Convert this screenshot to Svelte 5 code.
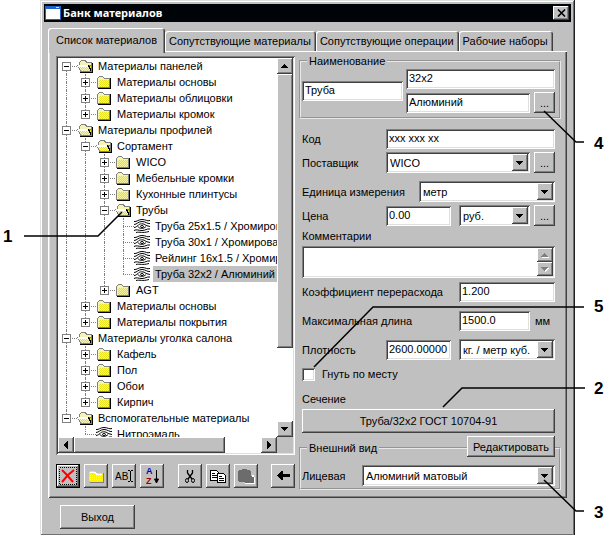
<script lang="ts">
  type Item = { label: string; open?: boolean; leaf?: boolean; selected?: boolean; children?: Item[] }
  type Row = { item: Item; rails: boolean[]; first: boolean; last: boolean }

  const tabs = ['Список материалов', 'Сопутствующие материалы', 'Сопутствующие операции', 'Рабочие наборы']
  let activeTab = $state(0)

  const materials: Item[] = [
    {
      label: 'Материалы панелей',
      open: true,
      children: [{ label: 'Материалы основы' }, { label: 'Материалы облицовки' }, { label: 'Материалы кромок' }],
    },
    {
      label: 'Материалы профилей',
      open: true,
      children: [
        {
          label: 'Сортамент',
          open: true,
          children: [
            { label: 'WICO' },
            { label: 'Мебельные кромки' },
            { label: 'Кухонные плинтусы' },
            {
              label: 'Трубы',
              open: true,
              children: [
                { label: 'Труба 25x1.5 / Хромированная', leaf: true },
                { label: 'Труба 30x1 / Хромированная', leaf: true },
                { label: 'Рейлинг 16x1.5 / Хромированный', leaf: true },
                { label: 'Труба 32x2 / Алюминий', leaf: true, selected: true },
              ],
            },
            { label: 'AGT' },
          ],
        },
        { label: 'Материалы основы' },
        { label: 'Материалы покрытия' },
      ],
    },
    {
      label: 'Материалы уголка салона',
      open: true,
      children: [{ label: 'Кафель' }, { label: 'Пол' }, { label: 'Обои' }, { label: 'Кирпич' }],
    },
    { label: 'Вспомогательные материалы', open: true, children: [{ label: 'Нитроэмаль', leaf: true }] },
  ]

  // rails: for every ancestor level, whether its vertical line goes on past this row
  function flatten(items: Item[], rails: boolean[] = []): Row[] {
    return items.flatMap((item, i) => {
      const last = i === items.length - 1
      const row = { item, rails, first: i === 0 && rails.length === 0, last }
      return [row, ...flatten(item.children ?? [], [...rails, !last])]
    })
  }
  const rows = flatten(materials)

  let name = $state('Труба')
  let size = $state('32x2')
  let finish = $state('Алюминий')
  let code = $state('xxx xxx xx')
  let price = $state('0.00')
  let comment = $state('')
  let overrun = $state('1.200')
  let maxLength = $state('1500.0')
  let density = $state('2600.00000')
  let bend = $state(false)
</script>

{#snippet arrow(dir: string)}
  <svg class="arrow" width="8" height="8" viewBox="0 0 8 8" shape-rendering="crispEdges" aria-hidden="true">
    {#if dir === 'up'}<path d="M0 6h7v-1h-1v-1h-1v-1h-1v-1h-1v1h-1v1h-1v1h-1z" />
    {:else if dir === 'down'}<path d="M0 2h7v1h-1v1h-1v1h-1v1h-1v-1h-1v-1h-1v-1h-1z" />
    {:else if dir === 'left'}<path d="M6 0v8h-1v-1h-1v-1h-1v-1h-1v-2h1v-1h1v-1h1v-1z" />
    {:else}<path d="M2 0v8h1v-1h1v-1h1v-1h1v-2h-1v-1h-1v-1h-1v-1z" />{/if}
  </svg>
{/snippet}

{#snippet combo(id: string, value: string, size: string)}
  <span class="combo {size}">
    <select {id}><option>{value}</option></select>
    <span class="drop">{@render arrow('down')}</span>
  </span>
{/snippet}

{#snippet icon(item: Item)}
  <svg class="icon" width="16" height="16" viewBox="0 0 16 16" aria-hidden="true">
    {#if item.leaf}
      <g fill="none" stroke="#000" stroke-width="1">
        <path d="M0 3.500C3 4 4 1.500 8 1.500S13 3.500 16 2.500" />
        <path d="M0 6.500C3 6.500 4 3.500 8 3.500S13 6 16 5.500" />
        <path d="M0 9.500C2 9.500 3 8 4 7.500C5 5.500 10 5 12 7.500L16 8.500" />
        <path d="M4 8.500C5 11 10 11 12 8.500" />
        <path d="M0 12.500C3 11 4 12.500 8 12.500S12 10.500 16 11" />
        <path d="M2 14.500C6 13.500 8 15.500 15 13.500" />
        <ellipse cx="8" cy="8.500" rx="1.500" ry="1" />
      </g>
    {:else if item.open}
      <g shape-rendering="crispEdges">
        <path fill="#000" d="M14 5h2v10h-13v-1h11z" />
        <path fill="#808080" d="M2 4h1v-1h1v-1h5v1h1v1h5v10h-12v-2h-1v-2h-1v-2h-1v-1h2z" />
        <path fill="#f6f4b0" d="M3 4h1v-1h4v1h1v1h5v2h-11z" />
        <path fill="#e6e222" d="M11 8h3v5h-1v-2h-1v-2h-1z" />
        <path fill="#fff" d="M1 7h10v1h1v2h-10v-1h-1z" />
        <path fill="#e6e222" d="M2 9h10v2h1v2h-9v-1h-1v-2h-1z" />
        <path stroke="#f8f6b8" stroke-dasharray="1 1" d="M2 9.500h10M4 11.500h9" />
        <path stroke="#f8f6b8" stroke-dasharray="1 1" d="M3 10.500h9M5 12.500h8" />
        <path fill="#000" d="M11 7h1v1h1v2h1v3h-1v-2h-1v-2h-1z" />
      </g>
    {:else}
      <g shape-rendering="crispEdges">
        <path fill="#000" d="M2 14h12v-10h1v11h-13z" />
        <path fill="#808080" d="M1 4h1v-1h1v-1h4v1h1v1h6v10h-13z" />
        <path fill="#f6f4b0" d="M2 4h1v-1h4v1h1v1h5v1h-10v7h-1z" />
        <path fill="#e6e222" d="M3 6h10v7h-10z" />
        <path stroke="#f5f3a0" stroke-dasharray="1 1" d="M3 6.500h10M3 8.500h10M3 10.500h10M3 12.500h10" />
        <path stroke="#f5f3a0" stroke-dasharray="1 1" d="M4 7.500h9M4 9.500h9M4 11.500h9" />
      </g>
    {/if}
  </svg>
{/snippet}

<main class="page">
  <div class="window">
    <header class="title">
      <svg width="16" height="14" viewBox="0 0 16 14" shape-rendering="crispEdges" aria-hidden="true">
        <rect width="16" height="14" fill="#1e63c8" />
        <rect x="1" y="3" width="14" height="10" fill="#fff" />
        <rect x="11" y="1" width="3" height="1" fill="#cfe0ff" />
      </svg>
      <h1>Банк материалов</h1>
      <button class="close" aria-label="Закрыть">
        <svg width="9" height="8" viewBox="0 0 9 8" aria-hidden="true">
          <path d="M1 0.500l7 7M8 0.500l-7 7" stroke="#000" stroke-width="1.600" />
        </svg>
      </button>
    </header>

    <div class="tabs" role="tablist">
      {#each tabs as tab, i}
        <button class="tab" class:active={i === activeTab} role="tab" aria-selected={i === activeTab} onclick={() => (activeTab = i)}>{tab}</button>
      {/each}
    </div>

    <section class="panel">
      <div class="browser">
        <div class="tree">
          <div class="view">
            <ul>
              {#each rows as row}
                <li>
                  {#each row.rails as rail}
                    <span class="cell" class:below={rail} class:above={rail}></span>
                  {/each}
                  <span class="cell branch" class:above={!row.first} class:below={!row.last}>
                    {#if !row.item.leaf}
                      <svg class="expander" width="9" height="9" viewBox="0 0 9 9" shape-rendering="crispEdges" aria-hidden="true">
                        <rect x="0.500" y="0.500" width="8" height="8" fill="#fff" stroke="#808080" />
                        <path d="M2 4h5v1h-5z" />
                        {#if !row.item.open}<path d="M4 2h1v5h-1z" />{/if}
                      </svg>
                    {/if}
                  </span>
                  {@render icon(row.item)}
                  <span class="label" class:selected={row.item.selected}>{row.item.label}</span>
                </li>
              {/each}
            </ul>
          </div>
          <div class="scroll vertical">
            <button class="step" aria-label="Вверх">{@render arrow('up')}</button>
            <div class="track"><div class="thumb"></div></div>
            <button class="step" aria-label="Вниз">{@render arrow('down')}</button>
          </div>
          <div class="scroll horizontal">
            <button class="step" aria-label="Влево">{@render arrow('left')}</button>
            <div class="track"><div class="thumb"></div></div>
            <button class="step" aria-label="Вправо">{@render arrow('right')}</button>
          </div>
        </div>

        <div class="toolbar">
          <button class="tool focused" aria-label="Удалить">
            <svg width="18" height="18" viewBox="0 0 18 18" aria-hidden="true">
              <rect x="0.500" y="0.500" width="17" height="17" fill="none" stroke="#000" stroke-dasharray="1 1" shape-rendering="crispEdges" />
              <path d="M3 3l5 5l6 7M15 3l-6 5l-6 7" fill="none" stroke="#f00" stroke-width="2" />
            </svg>
          </button>
          <button class="tool" aria-label="Новая папка">
            <svg width="18" height="18" viewBox="0 0 18 18" shape-rendering="crispEdges" aria-hidden="true">
              <path d="M3 15h13v-9h1v10h-14z" fill="#808080" />
              <path d="M2 5h1v-1h5v1h1v1h7v9h-13v-1h-1z" fill="#fff200" />
              <path d="M3 5h5v1h1v1h6" fill="none" stroke="#fff" />
              <path d="M3 8.500h12M3 10.500h12M3 12.500h12" stroke="#fff8a0" stroke-dasharray="1 1" />
            </svg>
          </button>
          <button class="tool" aria-label="Переименовать">
            <svg width="18" height="18" viewBox="0 0 18 18" fill="none" stroke="#000" shape-rendering="crispEdges" aria-hidden="true">
              <text class="abc" x="0" y="13">AB</text>
              <path d="M13 3.500h2M16 3.500h2M15.500 4v10M13 14.500h2M16 14.500h2" />
            </svg>
          </button>
          <button class="tool" aria-label="Сортировать">
            <svg width="18" height="18" viewBox="0 0 18 18" aria-hidden="true">
              <text class="sort a" x="3" y="7">A</text>
              <text class="sort z" x="3" y="17">Z</text>
              <path d="M13.500 3v12M11.500 12l2 4l2-4z" stroke="#000" />
            </svg>
          </button>
          <button class="tool gap" aria-label="Вырезать">
            <svg width="18" height="18" viewBox="0 0 18 18" fill="none" stroke="#000" aria-hidden="true">
              <path d="M6.500 3v3l4.500 6M11.500 3v3l-4.500 6" stroke-width="1.300" />
              <ellipse cx="6" cy="13.500" rx="1.500" ry="2" />
              <ellipse cx="12" cy="13.500" rx="1.500" ry="2" />
            </svg>
          </button>
          <button class="tool" aria-label="Копировать">
            <svg width="18" height="18" viewBox="0 0 18 18" fill="#fff" stroke="#000" shape-rendering="crispEdges" aria-hidden="true">
              <path d="M1.500 3.500h6l2 2v8h-8z" />
              <path d="M3 6.500h3M3 8.500h5M3 10.500h5" />
              <path d="M8.500 6.500h6l2 2v7h-8z" />
              <path d="M10 9.500h3M10 11.500h5M10 13.500h5" />
            </svg>
          </button>
          <button class="tool" aria-label="Вставить" disabled>
            <svg width="18" height="18" viewBox="0 0 18 18" shape-rendering="crispEdges" aria-hidden="true">
              <path d="M15 8h2v2h1v7h-10v-1h9v-5h-2z" fill="#fff" />
              <path d="M1 4h1v-1h3v-1h5v1h3v1h1v5h1v1h2v6h-9v-1h-6v-1h-1z" fill="#6c6c6c" />
            </svg>
          </button>
          <button class="tool push" aria-label="Назад">
            <svg width="18" height="18" viewBox="0 0 18 18" shape-rendering="crispEdges" aria-hidden="true">
              <path d="M3 8h1v-1h1v-1h1v-1h1v-1h2v3h7v3h-7v3h-2v-1h-1v-1h-1v-1h-1v-1h-1z" />
            </svg>
          </button>
        </div>
      </div>

      <form class="details" onsubmit={(e) => e.preventDefault()}>
        <fieldset class="naming">
          <legend>Наименование</legend>
          <div class="parts">
            <input aria-label="Вид" bind:value={name} />
            <div class="stack">
              <div class="row"><input class="grow" aria-label="Размер" bind:value={size} /></div>
              <div class="row">
                <input class="grow" aria-label="Материал" bind:value={finish} />
                <button class="more" aria-label="Выбрать материал">...</button>
              </div>
            </div>
          </div>
        </fieldset>

        <div class="fields">
          <div class="row">
            <label class="caption" for="code">Код</label>
            <input id="code" class="grow" bind:value={code} />
          </div>
          <div class="row">
            <label class="caption" for="vendor">Поставщик</label>
            {@render combo('vendor', 'WICO', 'grow')}
            <button class="more" aria-label="Выбрать поставщика">...</button>
          </div>
          <div class="row apart">
            <label class="caption" for="unit">Единица измерения</label>
            {@render combo('unit', 'метр', 'long')}
          </div>
          <div class="row">
            <label class="caption" for="price">Цена</label>
            <input id="price" class="grow" bind:value={price} />
            <span class="spacer"></span>
            {@render combo('currency', 'руб.', 'short')}
            <button class="more" aria-label="Выбрать валюту">...</button>
          </div>
          <label for="comment">Комментарии</label>
          <div class="memo">
            <textarea id="comment" bind:value={comment}></textarea>
            <div class="spin">
              <button class="step" aria-label="Вверх" disabled>{@render arrow('up')}</button>
              <button class="step" aria-label="Вниз" disabled>{@render arrow('down')}</button>
            </div>
          </div>
          <div class="row">
            <label class="caption" for="overrun">Коэффициент перерасхода</label>
            <input id="overrun" class="medium" bind:value={overrun} />
          </div>
          <div class="row apart">
            <label class="caption" for="length">Максимальная длина</label>
            <input id="length" class="short" bind:value={maxLength} />
            <span class="unit">мм</span>
          </div>
          <div class="row apart">
            <label class="caption" for="density">Плотность</label>
            <input id="density" class="grow" bind:value={density} />
            <span class="spacer"></span>
            {@render combo('density-unit', 'кг. / метр куб.', 'medium')}
          </div>
          <label class="check"><input type="checkbox" bind:checked={bend} />Гнуть по месту</label>
          <span class="section">Сечение</span>
          <button class="wide">Труба/32x2 ГОСТ 10704-91</button>
        </div>

        <fieldset class="look">
          <legend>Внешний вид</legend>
          <button class="edit">Редактировать</button>
          <div class="row">
            <label class="face" for="face">Лицевая</label>
            {@render combo('face', 'Алюминий матовый', 'grow')}
          </div>
        </fieldset>
      </form>
    </section>

    <footer><button class="exit">Выход</button></footer>
  </div>

  <!-- numbered callouts, tied to the side of the window they stand on -->
  <svg class="notes left" width="130" height="535" viewBox="0 0 130 535">
    <path d="M24 236H98L122 212" />
    <text x="3" y="242">1</text>
  </svg>
  <svg class="notes right" width="305" height="535" viewBox="302 0 305 535">
    <path d="M544 111L576 142H584M314 367L373 307H584M443 407L462 388H585M544 480L576 511H584" />
    <text x="594" y="149">4</text>
    <text x="594" y="312">5</text>
    <text x="594" y="394">2</text>
    <text x="594" y="518">3</text>
  </svg>
</main>

<style>
  :global(body) {
    background: #fff;
  }
  .page {
    --face: #c0c0c0;
    --raised: inset -1px -1px #404040, inset 1px 1px #fff, inset -2px -2px #808080;
    --sunken: inset 1px 1px #808080, inset -1px -1px #fff, inset 2px 2px #404040, inset -2px -2px #dfdfdf;
    position: relative;
    padding: 0 32px 0 40px;
    font-family: 'Liberation Sans', Arial, sans-serif;
    font-size: 11px;
    line-height: 14px;
    color: #000;
  }
  .page * {
    box-sizing: border-box;
  }
  button,
  input,
  select,
  textarea {
    margin: 0;
    border: 0;
    border-radius: 0;
    font: inherit;
    color: inherit;
    outline: none;
  }
  button {
    display: flex;
    align-items: center;
    justify-content: center;
    padding: 0;
    background: var(--face);
    box-shadow: var(--raised);
    white-space: nowrap;
  }
  .window {
    padding: 4px;
    background: var(--face);
    box-shadow:
      inset -1px -1px #202020,
      inset 1px 1px #dfdfdf,
      inset -2px -2px #707070,
      inset 2px 2px #fff;
  }

  .title {
    display: flex;
    align-items: center;
    gap: 2px;
    height: 18px;
    padding: 0 2px 0 1px;
    background: #000408;
    color: #fff;
  }
  h1 {
    flex: 1;
    margin: 0;
    font-family: 'Noto Sans', 'Open Sans', sans-serif;
    font-size: 11px;
    font-weight: 700;
  }
  .close {
    width: 16px;
    height: 14px;
  }

  .tabs {
    display: flex;
    align-items: flex-end;
    height: 24px;
    margin: 5px 4px 0;
  }
  .tab {
    height: 20px;
    padding: 0 5px 0 4px;
    border-radius: 3px 3px 0 0;
    box-shadow:
      inset 1px 1px #fff,
      inset -1px 0 #404040,
      inset -2px 0 #808080;
  }
  .tab.active {
    position: relative;
    height: 25px;
    margin-bottom: -2px;
    padding: 0 8px 2px;
  }

  .panel {
    display: grid;
    grid-template-columns: minmax(0, 239fr) minmax(0, 262fr);
    gap: 4px;
    margin: 0 4px;
    padding: 3px 6px 8px 8px;
    box-shadow:
      inset 1px 1px #fff,
      inset -1px -1px #404040,
      inset 2px 0 #dfdfdf,
      inset -2px -2px #808080;
  }

  .tree {
    display: grid;
    grid-template-columns: minmax(0, 1fr) 16px;
    grid-template-rows: 379px 16px;
    margin-top: 2px;
    padding: 2px;
    box-shadow: var(--sunken);
  }
  .view {
    overflow: hidden;
    background: #fff;
  }
  ul {
    margin: 0;
    padding: 0;
    list-style: none;
  }
  li {
    display: flex;
    align-items: center;
    height: 16px;
    white-space: nowrap;
  }
  .cell {
    position: relative;
    flex: none;
    width: 19px;
    height: 16px;
  }
  .above::before,
  .below::after {
    content: '';
    position: absolute;
    left: 8px;
    height: 8px;
    border-left: 1px dotted #808080;
  }
  .above::before {
    top: 0;
  }
  .below::after {
    bottom: 0;
  }
  .branch {
    background: repeating-linear-gradient(90deg, #808080 0 1px, transparent 1px 2px) 8px 8px / 11px 1px no-repeat;
  }
  .expander {
    position: absolute;
    z-index: 1;
    top: 4px;
    left: 4px;
  }
  .icon {
    flex: none;
    margin-right: 3px;
  }
  .label {
    padding: 1px 2px;
  }
  .label.selected {
    background: var(--face);
  }

  .scroll {
    display: flex;
    background: #fff;
  }
  .vertical {
    flex-direction: column;
  }
  .track {
    flex: 1;
  }
  .step {
    flex: none;
    width: 16px;
    height: 16px;
  }
  .thumb {
    background: var(--face);
    box-shadow: var(--raised);
  }
  .vertical .thumb {
    height: 79%;
  }
  .horizontal .thumb {
    width: 81%;
    height: 100%;
  }
  .step:disabled .arrow {
    fill: #808080;
    filter: drop-shadow(1px 1px #fff);
  }

  .toolbar {
    display: flex;
    gap: 4px;
    margin-top: 9px;
  }
  .tool {
    width: 24px;
    height: 24px;
  }
  .gap {
    margin-left: 10px;
  }
  .push {
    margin-left: auto;
  }
  .focused {
    border: 1px solid #000;
  }
  .abc {
    font-size: 10px;
    fill: #000;
    stroke: none;
  }
  .sort {
    font-size: 9px;
    font-weight: 700;
  }
  .a {
    fill: #0000c0;
  }
  .z {
    fill: #a00000;
  }

  fieldset {
    position: relative;
    min-width: 0;
    margin: 0;
    border: 2px groove #fff;
    border-color: #e8e8e8;
  }
  legend {
    margin-left: 5px;
    padding: 0 2px;
  }
  .naming {
    padding: 0 4px 4px 1px;
  }
  .parts {
    display: grid;
    grid-template-columns: minmax(0, 101fr) minmax(0, 149fr);
    align-items: center;
    gap: 3px;
  }
  .stack {
    display: flex;
    flex-direction: column;
    gap: 3px;
  }
  .row {
    display: flex;
    align-items: center;
    gap: 4px;
    height: 21px;
  }
  input,
  select {
    min-width: 0;
    height: 20px;
    padding: 0 4px 1px 3px;
    background: #fff;
    box-shadow: var(--sunken);
  }
  .more {
    flex: none;
    align-self: stretch;
    width: 21px;
  }
  .fields {
    display: flex;
    flex-direction: column;
    gap: 3px;
    margin-top: 9px;
    padding: 0 6px 0 3px;
  }
  .caption {
    flex: none;
    width: 80px;
    white-space: nowrap;
  }
  .grow {
    flex: 1;
  }
  .long,
  .medium,
  .short {
    flex: none;
    margin-left: auto;
  }
  .long {
    width: 136px;
  }
  .medium {
    width: 96px;
  }
  .short {
    width: 71px;
  }
  .spacer,
  .unit {
    flex: none;
  }
  .unit {
    width: 21px;
    padding-left: 1px;
  }
  .apart {
    margin-top: 5px;
  }
  .combo {
    position: relative;
    display: flex;
    min-width: 0;
  }
  .combo select {
    width: 100%;
    height: 21px;
    padding: 1px 18px 0 4px;
    appearance: none;
  }
  .drop {
    position: absolute;
    top: 2px;
    right: 2px;
    bottom: 2px;
    width: 16px;
    display: flex;
    align-items: center;
    justify-content: center;
    background: var(--face);
    box-shadow: var(--raised);
    pointer-events: none;
  }
  .memo {
    display: flex;
    height: 32px;
    padding: 2px;
    background: #fff;
    box-shadow: var(--sunken);
  }
  textarea {
    flex: 1;
    min-width: 0;
    padding: 0 2px;
    background: transparent;
    resize: none;
  }
  .spin .step {
    height: 14px;
  }
  .check {
    display: flex;
    align-items: center;
    gap: 7px;
    margin-top: 4px;
  }
  .check input {
    width: 13px;
    height: 13px;
    appearance: none;
  }
  .check input:checked {
    background: linear-gradient(#000, #000) center / 5px 5px no-repeat #fff;
  }
  .section {
    margin-top: 8px;
  }
  .wide {
    height: 24px;
  }
  .look {
    margin-top: 8px;
    padding: 10px 4px 2px 1px;
  }
  .edit {
    position: absolute;
    top: -19px;
    right: 4px;
    width: 88px;
    height: 21px;
  }
  .face {
    flex: none;
    width: 56px;
  }

  footer {
    padding: 7px 16px 3px;
  }
  .exit {
    width: 75px;
    height: 24px;
  }

  .notes {
    position: absolute;
    top: 0;
    pointer-events: none;
  }
  .notes path {
    fill: none;
    stroke: #000;
    stroke-width: 1.5;
  }
  .notes text {
    font-size: 17px;
    font-weight: 700;
  }
  .left {
    left: 0;
  }
  .right {
    right: 0;
  }
</style>
